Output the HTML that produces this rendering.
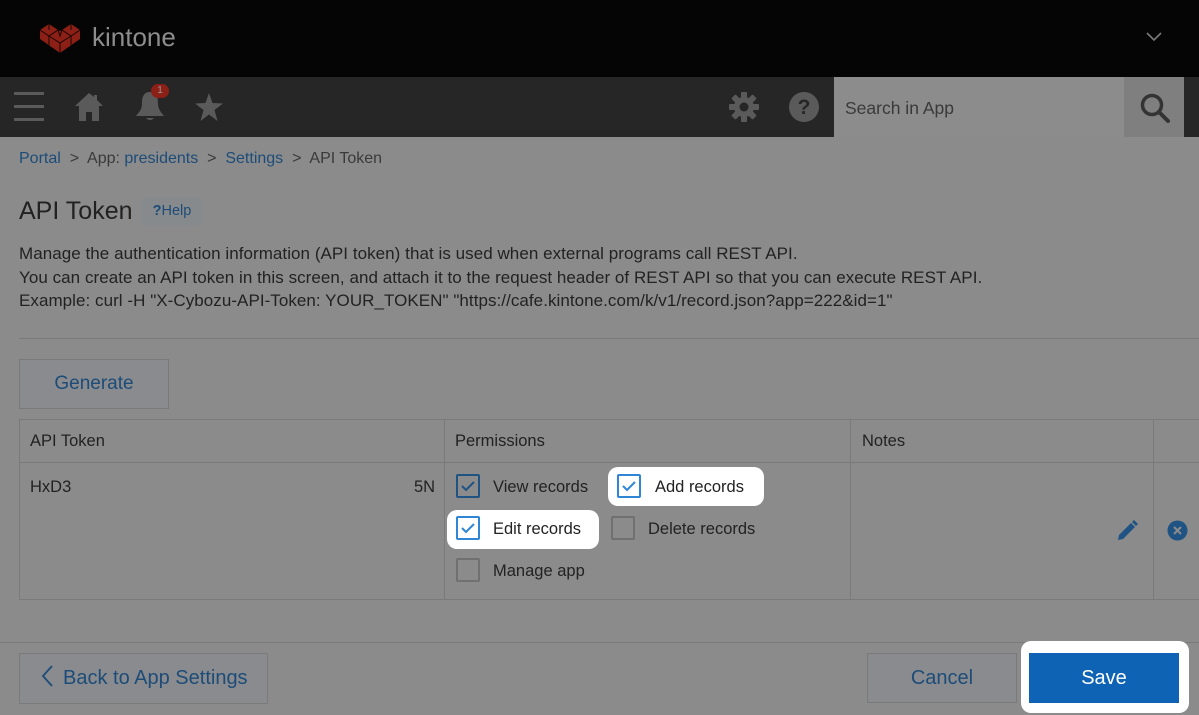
<!DOCTYPE html>
<html><head><meta charset="utf-8"><style>
*{box-sizing:border-box;margin:0;padding:0}
body{width:1199px;height:715px;overflow:hidden;background:#8b8b8b;font-family:"Liberation Sans",Arial,sans-serif;color:#222;position:relative}
.a{position:absolute}
.link{color:#1d4c78}
.cb{position:absolute;width:24px;height:24px;border:2px solid #707070;border-radius:2px}
.cb.on{border-color:#1f5384}
.cb.on svg{position:absolute;left:3px;top:4px}
.hl{position:absolute;background:#fff;border-radius:10px}
.t{position:absolute;font-size:16.5px;color:#222;white-space:nowrap}
</style></head><body>
<div class="a" style="left:0;top:0;width:1199px;height:77px;background:#050505"></div>
<svg class="a" style="left:38px;top:22px" width="44" height="32" viewBox="0 0 44 32">
<path d="M2 8 L11 2 L20 8 L22 9 L24 8 L33 2 L42 8 L42 17 L22 31 L2 17 Z" fill="#8c2016"/>
<path d="M2 8 L11 14 L20 8 M11 14 L11 23 M11 14 L22 21 L33 14 M22 21 L22 31 M24 8 L33 14 L42 8 M33 14 L33 23 M11 2 L11 8 M33 2 L33 8 M20 8 L22 14 L24 8" stroke="#1a0503" stroke-width="1" fill="none"/>
</svg>
<div class="a" style="left:92px;top:22px;font-size:26px;color:#8d8d8d">kintone</div>
<svg class="a" style="left:1146px;top:32px" width="16" height="10"><path d="M1 1 L8 8 L15 1" stroke="#7a7a7a" stroke-width="1.6" fill="none"/></svg>

<div class="a" style="left:0;top:77px;width:1199px;height:60px;background:#262626"></div>
<svg class="a" style="left:14px;top:92px" width="30" height="30"><rect x="0" y="0" width="30" height="3" fill="#5a5a5a"/><rect x="0" y="13" width="30" height="3" fill="#5a5a5a"/><rect x="0" y="26" width="30" height="3" fill="#5a5a5a"/></svg>
<svg class="a" style="left:74px;top:92px" width="30" height="30" viewBox="0 0 30 30"><path d="M15 1 L1 14 L5 14 L5 29 L12 29 L12 20 L18 20 L18 29 L25 29 L25 14 L29 14 L23 8 L23 3 L20 3 L20 5 Z" fill="#5a5a5a"/></svg>
<svg class="a" style="left:134px;top:88px" width="32" height="34" viewBox="0 0 32 34"><path d="M16 4 C9 4 8 10 8 16 C8 22 4 25 2 28 L30 28 C28 25 24 22 24 16 C24 10 23 4 16 4 Z M12 30 Q16 34 20 30 Z" fill="#5a5a5a"/></svg>
<div class="a" style="left:151px;top:84px;width:18px;height:14px;border-radius:7px;background:#8c2016;color:#9a9a9a;font-size:10px;text-align:center;line-height:14px">1</div>
<svg class="a" style="left:194px;top:93px" width="30" height="29" viewBox="0 0 30 29"><path d="M15 0 L18.5 10 L29 10.5 L20.5 17 L23.5 28 L15 21.5 L6.5 28 L9.5 17 L1 10.5 L11.5 10 Z" fill="#5a5a5a"/></svg>
<svg class="a" style="left:729px;top:92px" width="30" height="30" viewBox="0 0 30 30"><g fill="#5a5a5a"><circle cx="15" cy="15" r="10"/><rect x="12" y="0" width="6" height="30" rx="1"/><rect x="0" y="12" width="30" height="6" rx="1"/><rect x="12" y="0" width="6" height="30" rx="1" transform="rotate(45 15 15)"/><rect x="12" y="0" width="6" height="30" rx="1" transform="rotate(-45 15 15)"/></g><circle cx="15" cy="15" r="4.5" fill="#262626"/></svg>
<svg class="a" style="left:789px;top:92px" width="30" height="30"><circle cx="15" cy="15" r="15" fill="#5a5a5a"/><text x="15" y="22" font-family="Liberation Sans" font-weight="bold" font-size="21" text-anchor="middle" fill="#262626">?</text></svg>
<div class="a" style="left:834px;top:77px;width:290px;height:60px;background:#8c8c8c"></div>
<div class="a" style="left:845px;top:98px;font-size:17.5px;color:#3a3a3a">Search in App</div>
<div class="a" style="left:1124px;top:77px;width:60px;height:60px;background:#7f7f7f"></div>
<svg class="a" style="left:1139px;top:92px" width="32" height="32"><circle cx="13" cy="13" r="9.5" stroke="#333" stroke-width="3.5" fill="none"/><path d="M20 20 L29 29" stroke="#333" stroke-width="4" stroke-linecap="round"/></svg>

<div class="a" style="left:19px;top:150px;font-size:16px;color:#3a3a3a;white-space:nowrap"><span class="link">Portal</span> &nbsp;&gt;&nbsp; App: <span class="link">presidents</span> &nbsp;&gt;&nbsp; <span class="link">Settings</span> &nbsp;&gt;&nbsp; API Token</div>
<div class="a" style="left:19px;top:197px;font-size:25px;color:#222">API Token</div>
<div class="a" style="left:142px;top:197px;width:60px;height:28px;background:#878a8d;border-radius:3px;font-size:14.5px;line-height:28px;text-align:center" ><span class="link"><b>?</b>Help</span></div>
<div class="a" style="left:19px;top:242px;font-size:17px;line-height:23.5px;color:#222;white-space:nowrap;letter-spacing:0.05px">Manage the authentication information (API token) that is used when external programs call REST API.<br>You can create an API token in this screen, and attach it to the request header of REST API so that you can execute REST API.<br>Example: curl -H "X-Cybozu-API-Token: YOUR_TOKEN" "https://cafe.kintone.com/k/v1/record.json?app=222&amp;id=1"</div>
<div class="a" style="left:19px;top:338px;width:1180px;height:1px;background:#7a7a7a"></div>
<div class="a" style="left:19px;top:359px;width:150px;height:50px;background:#898b8e;border:1px solid #7a7a7a;font-size:19px;line-height:48px;text-align:center" ><span class="link">Generate</span></div>

<div class="a" style="left:19px;top:419px;width:1181px;height:181px;border:1px solid #7a7a7a"></div>
<div class="a" style="left:19px;top:462px;width:1180px;height:1px;background:#7a7a7a"></div>
<div class="a" style="left:444px;top:419px;width:1px;height:181px;background:#7a7a7a"></div>
<div class="a" style="left:850px;top:419px;width:1px;height:181px;background:#7a7a7a"></div>
<div class="a" style="left:1153px;top:419px;width:1px;height:181px;background:#7a7a7a"></div>
<div class="t" style="left:30px;top:432px">API Token</div>
<div class="t" style="left:455px;top:432px">Permissions</div>
<div class="t" style="left:862px;top:432px">Notes</div>
<div class="t" style="left:30px;top:478px">HxD3</div>
<div class="t" style="left:414px;top:478px">5N</div>

<div class="cb on" style="left:456px;top:474px"><svg width="16" height="14"><path d="M1 6 L5 10 L13 2" stroke="#1f5384" stroke-width="2" fill="none"/></svg></div>
<div class="t" style="left:493px;top:478px">View records</div>
<div class="hl" style="left:608px;top:467px;width:156px;height:39px"></div>
<div class="cb on" style="left:617px;top:474px;border-color:#2f86d6"><svg width="16" height="14"><path d="M1 6 L5 10 L13 2" stroke="#2f86d6" stroke-width="2" fill="none"/></svg></div>
<div class="t" style="left:655px;top:478px">Add records</div>
<div class="hl" style="left:447px;top:510px;width:152px;height:39px"></div>
<div class="cb on" style="left:456px;top:516px;border-color:#2f86d6"><svg width="16" height="14"><path d="M1 6 L5 10 L13 2" stroke="#2f86d6" stroke-width="2" fill="none"/></svg></div>
<div class="t" style="left:493px;top:520px">Edit records</div>
<div class="cb" style="left:611px;top:516px"></div>
<div class="t" style="left:648px;top:520px">Delete records</div>
<div class="cb" style="left:456px;top:558px"></div>
<div class="t" style="left:493px;top:562px">Manage app</div>

<svg class="a" style="left:1116px;top:520px" width="22" height="22" viewBox="0 0 22 22"><path d="M2 20 L3 15 L15 3 L19 7 L7 19 Z M16 2 L18 0 L22 4 L20 6 Z" fill="#1f5384"/></svg>
<svg class="a" style="left:1167px;top:520px" width="21" height="21"><circle cx="10.5" cy="10.5" r="10" fill="#1f5384"/><path d="M7 7 L14 14 M14 7 L7 14" stroke="#8b8b8b" stroke-width="2"/></svg>

<div class="a" style="left:0;top:642px;width:1199px;height:1px;background:#7a7a7a"></div>
<div class="a" style="left:19px;top:653px;width:249px;height:51px;background:#898b8e;border:1px solid #7a7a7a;font-size:20px;line-height:49px;padding-left:20px;white-space:nowrap"><svg width="14" height="22" style="vertical-align:-3px;margin-right:9px"><path d="M12 1 L3 11 L12 21" stroke="#1d4c78" stroke-width="1.8" fill="none"/></svg><span class="link">Back to App Settings</span></div>
<div class="a" style="left:867px;top:653px;width:150px;height:50px;background:#898b8e;border:1px solid #7a7a7a;font-size:20px;line-height:48px;text-align:center"><span class="link">Cancel</span></div>
<div class="hl" style="left:1021px;top:641px;width:168px;height:72px"></div>
<div class="a" style="left:1029px;top:653px;width:150px;height:50px;background:#0f63b5;color:#fff;font-size:20px;line-height:50px;text-align:center">Save</div>
</body></html>
